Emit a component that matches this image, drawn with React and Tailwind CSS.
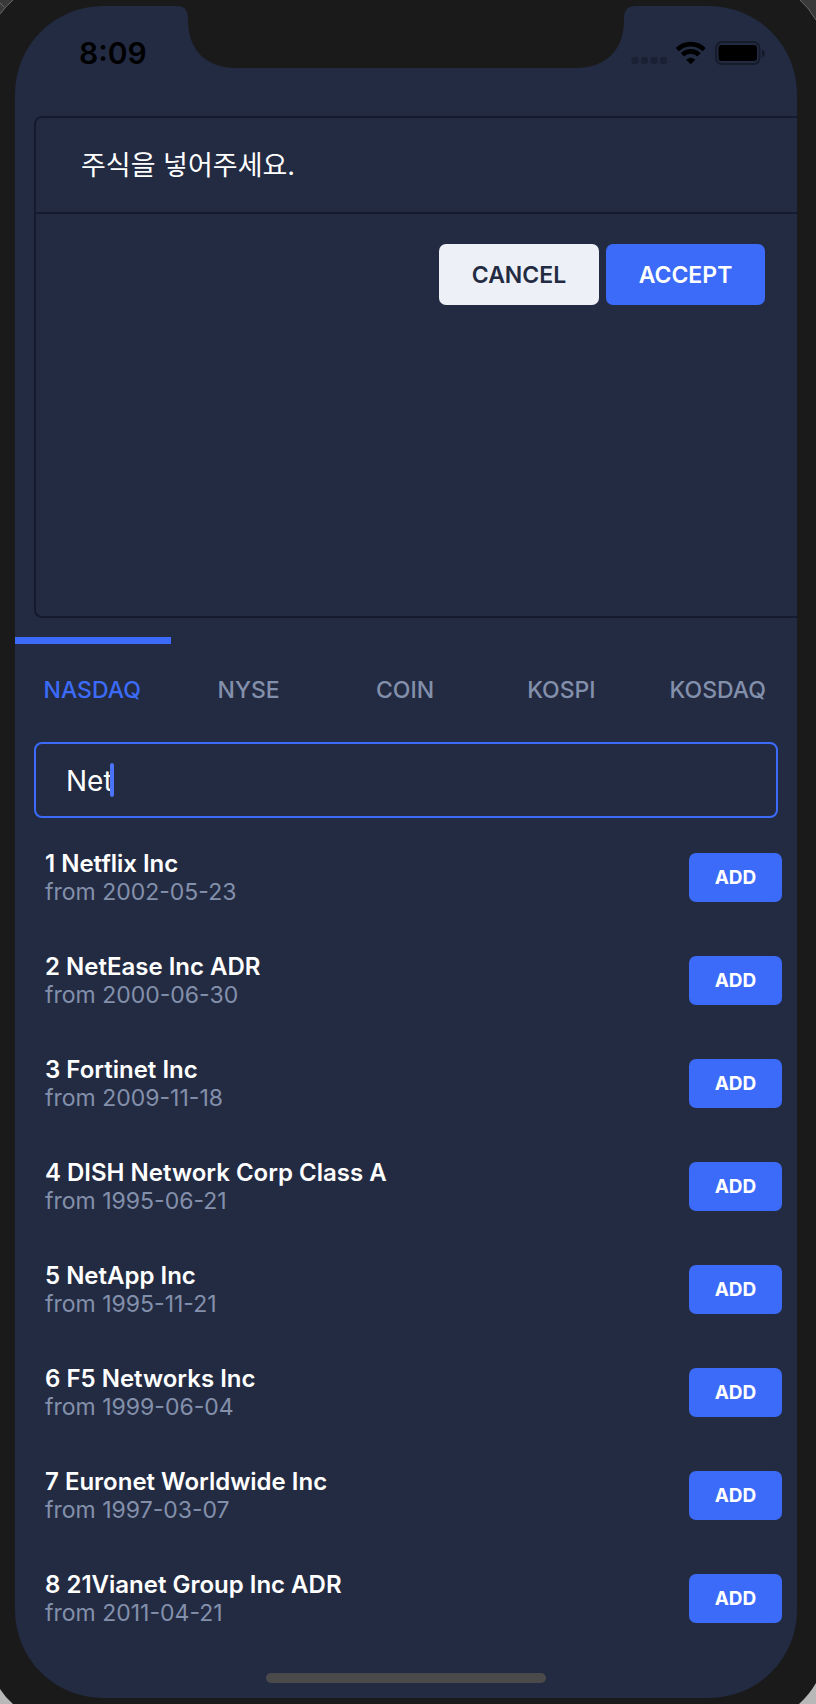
import { useState } from "react"
import clsx from "clsx"

const markets = ["NASDAQ", "NYSE", "COIN", "KOSPI", "KOSDAQ"]

const stocks = [
    { id: 1, name: "Netflix Inc", from: "2002-05-23" },
    { id: 2, name: "NetEase Inc ADR", from: "2000-06-30" },
    { id: 3, name: "Fortinet Inc", from: "2009-11-18" },
    { id: 4, name: "DISH Network Corp Class A", from: "1995-06-21" },
    { id: 5, name: "NetApp Inc", from: "1995-11-21" },
    { id: 6, name: "F5 Networks Inc", from: "1999-06-04" },
    { id: 7, name: "Euronet Worldwide Inc", from: "1997-03-07" },
    { id: 8, name: "21Vianet Group Inc ADR", from: "2011-04-21" },
]

function StatusIcons() {
    return (
        <svg width="134" height="24" viewBox="0 0 134 24" aria-hidden="true">
            <g fill="#1b2135">
                <rect x="0.5" y="16" width="7" height="7" rx="2" />
                <rect x="10" y="16" width="7" height="7" rx="2" />
                <rect x="19.5" y="16" width="7" height="7" rx="2" />
                <rect x="29" y="16" width="7" height="7" rx="2" />
            </g>
            <g fill="none" stroke="#000" strokeWidth="4.6">
                <path d="M46.3 8.6a19.2 19.2 0 0 1 26.8 0" />
                <path d="M51.4 13.8a11.8 11.8 0 0 1 16.6 0" />
            </g>
            <path
                d="M59.7 23l-4.2-4.2a6 6 0 0 1 8.4 0z"
                fill="#000"
                stroke="#000"
                strokeWidth="0.5"
            />
            <rect
                x="85"
                y="1"
                width="43.5"
                height="22"
                rx="6"
                fill="none"
                stroke="#161b2c"
                strokeWidth="2"
            />
            <rect x="87.5" y="4" width="38.5" height="16" rx="3" fill="#000" />
            <path d="M131 8.5c4 1.2 4 6.8 0 8z" fill="#161b2c" />
        </svg>
    )
}

function Notch() {
    return (
        <svg
            className="absolute top-0 left-1/2 -translate-x-1/2"
            width="460"
            height="62"
            viewBox="0 0 460 62"
            aria-hidden="true"
        >
            <path
                d="M0 0C9 0 12 4 12 14C12 46 32 62 60 62H400C428 62 448 46 448 14C448 4 451 0 460 0Z"
                fill="#1a1a1a"
            />
        </svg>
    )
}

// What shows behind the rounded outer edge of the phone
function FrameCorners() {
    return (
        <>
            <svg className="absolute top-0 left-0" width="14" height="14" aria-hidden="true">
                <path d="M0 0H13Q6 6 0 14Z" fill="#3a3a3a" />
                <path d="M0 14Q6 6 13 0M0 3L4 7" stroke="#6a6a6a" fill="none" />
            </svg>
            <svg className="absolute top-0 right-0" width="18" height="20" aria-hidden="true">
                <path d="M2 0H18V20Q11 8 2 0Z" fill="#3a3a3a" />
                <path d="M2 0Q11 8 18 20" stroke="#6a6a6a" fill="none" />
            </svg>
            <svg className="absolute bottom-0 left-0" width="14" height="16" aria-hidden="true">
                <path d="M0 1Q5 9 13 16H0Z" fill="#b8b8b8" />
            </svg>
            <svg className="absolute right-0 bottom-0" width="18" height="21" aria-hidden="true">
                <path d="M18 0Q11 12 1 21H18Z" fill="#b8b8b8" />
            </svg>
        </>
    )
}

function StockRow({ stock }) {
    return (
        <li className="flex h-[103px] items-center justify-between pr-[15px] pl-[30px]">
            <div className="leading-[29px]">
                <h2 className="text-[24px] font-semibold text-white">
                    {stock.id} {stock.name}
                </h2>
                <p className="text-[23px] text-[#8390ab]">from {stock.from}</p>
            </div>
            <button
                type="button"
                aria-label={`ADD ${stock.name}`}
                className="h-[49px] w-[93px] rounded-[7px] bg-[#3b6bf8] pt-[2px] text-[19px] font-bold text-white"
            >
                ADD
            </button>
        </li>
    )
}

export default function App() {
    const [market, setMarket] = useState("NASDAQ")
    const [query, setQuery] = useState("Net")

    return (
        <div className="relative min-h-screen overflow-hidden bg-[#1a1a1a] pt-[6px] pr-[19px] pb-[6px] pl-[15px] font-['Inter','Noto_Sans_CJK_KR',sans-serif]">
            <FrameCorners />
            <div className="relative overflow-hidden rounded-[88px] bg-[#232b43]">
                <Notch />
                <header className="mb-4 flex h-[94px] items-center justify-between pr-8 pl-16">
                    <time className="text-[30px] font-semibold text-black">8:09</time>
                    <StatusIcons />
                </header>

                <section className="ml-[19px] h-[502px] rounded-l-[8px] border-2 border-r-0 border-[#151a2e]">
                    <h1 className="flex h-[96px] items-center border-b-2 border-[#151a2e] pt-[2px] pl-[45px] text-[27px] text-white">
                        주식을 넣어주세요.
                    </h1>
                    <div className="flex justify-end gap-[7px] pt-[30px] pr-8">
                        <button
                            type="button"
                            className="h-[61px] w-[160px] rounded-[7px] bg-[#edf1f7] pt-[2px] text-[23px] font-semibold text-[#232b43]"
                        >
                            CANCEL
                        </button>
                        <button
                            type="button"
                            className="h-[61px] w-[159px] rounded-[7px] bg-[#3b6bf8] pt-[2px] text-[23px] font-semibold text-white"
                        >
                            ACCEPT
                        </button>
                    </div>
                </section>

                <nav className="mt-[19px] grid grid-cols-5" role="tablist">
                    {markets.map((name) => (
                        <button
                            key={name}
                            type="button"
                            role="tab"
                            aria-selected={name === market}
                            onClick={() => setMarket(name)}
                            className={clsx(
                                "h-[105px] border-t-[7px] pr-[2px] pb-[6px] text-[23px] font-medium",
                                name === market
                                    ? "border-[#3b6bf8] text-[#3b6bf8]"
                                    : "border-transparent text-[#8390ab]"
                            )}
                        >
                            {name}
                        </button>
                    ))}
                </nav>

                <div className="relative mr-[19px] ml-[19px]">
                    <input
                        type="text"
                        aria-label="Search stocks"
                        value={query}
                        onChange={(e) => setQuery(e.target.value)}
                        className="block h-[76px] w-full rounded-[8px] border-2 border-[#3b6bf8] bg-transparent px-[30px] pt-[2px] text-[28px] text-white caret-[#4a74f5] outline-none"
                    />
                    <span className="absolute top-[21px] left-[76px] h-[34px] w-1 rounded-full bg-[#4a74f5]" />
                </div>

                <ul className="mt-2">
                    {stocks.map((stock) => (
                        <StockRow key={stock.id} stock={stock} />
                    ))}
                </ul>

                <div className="mx-auto mt-[23px] mb-[15px] h-[10px] w-[280px] rounded-full bg-[#4a4a4a]" />
            </div>
        </div>
    )
}
